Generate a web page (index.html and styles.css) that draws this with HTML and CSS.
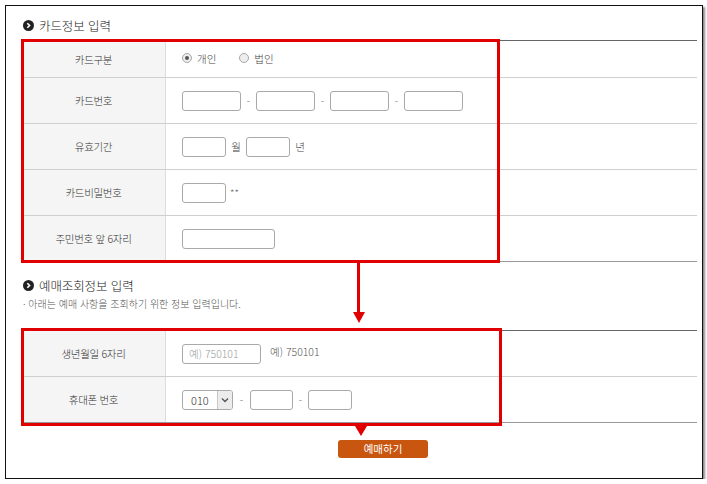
FILE: index.html
```html
<!DOCTYPE html>
<html lang="ko">
<head>
<meta charset="utf-8">
<title>카드정보 입력</title>
<link rel="stylesheet" href="styles.css">
</head>
<body>
<div class="frame">
  <h2 class="sec-title"><svg class="bullet" viewBox="0 0 11 11" width="11" height="11"><circle cx="5.5" cy="5.5" r="5.5" fill="#222"/><path d="M4.3 3.2 L6.6 5.5 L4.3 7.8" fill="none" stroke="#fff" stroke-width="1.6"/></svg>카드정보 입력</h2>
  <div class="table">
    <div class="row first">
      <div class="label">카드구분</div>
      <div class="value">
        <span class="radio checked"></span><span class="rlabel">개인</span>
        <span class="radio"></span><span class="rlabel">법인</span>
      </div>
    </div>
    <div class="row">
      <div class="label">카드번호</div>
      <div class="value">
        <input class="inp w59" type="text"><span class="dash">-</span>
        <input class="inp w59" type="text"><span class="dash">-</span>
        <input class="inp w59" type="text"><span class="dash">-</span>
        <input class="inp w59" type="text">
      </div>
    </div>
    <div class="row">
      <div class="label">유효기간</div>
      <div class="value">
        <input class="inp w44" type="text"><span class="unit">월</span>
        <input class="inp w44" type="text"><span class="unit">년</span>
      </div>
    </div>
    <div class="row">
      <div class="label">카드비밀번호</div>
      <div class="value">
        <input class="inp w44" type="password"><span class="stars">**</span>
      </div>
    </div>
    <div class="row">
      <div class="label">주민번호 앞 6자리</div>
      <div class="value">
        <input class="inp w93" type="text">
      </div>
    </div>
  </div>

  <h2 class="sec-title second"><svg class="bullet" viewBox="0 0 11 11" width="11" height="11"><circle cx="5.5" cy="5.5" r="5.5" fill="#222"/><path d="M4.3 3.2 L6.6 5.5 L4.3 7.8" fill="none" stroke="#fff" stroke-width="1.6"/></svg>예매조회정보 입력</h2>
  <p class="note">· 아래는 예매 사항을 조회하기 위한 정보 입력입니다.</p>
  <div class="table t2">
    <div class="row">
      <div class="label">생년월일 6자리</div>
      <div class="value">
        <input class="inp w79" type="text" placeholder="예) 750101"><span class="example">예) 750101</span>
      </div>
    </div>
    <div class="row">
      <div class="label">휴대폰 번호</div>
      <div class="value">
        <div class="select"><span class="sel-text">010</span><span class="sel-btn"><svg viewBox="0 0 8 6" width="8" height="6"><path d="M1 1.5 L4 4.5 L7 1.5" fill="none" stroke="#555" stroke-width="1.4"/></svg></span></div><span class="dash wide">-</span>
        <input class="inp w43" type="text"><span class="dash">-</span>
        <input class="inp w44" type="text">
      </div>
    </div>
  </div>
  <div class="actions"><button class="btn" type="button">예매하기</button></div>

  <div class="mark box1"></div>
  <div class="mark box2"></div>
  <div class="arrow-line a1"></div>
  <div class="arrow-head h1"></div>
  <div class="arrow-head h2"></div>
</div>
</body>
</html>
```
FILE: styles.css
```css
* { box-sizing: border-box; }
html, body { margin: 0; padding: 0; background: #fff; }
body { font-family: "Noto Sans CJK KR", "Noto Sans", sans-serif; color: #333; }

.frame {
  position: relative;
  margin: 5px 0 0 5px;
  width: 698px;
  height: 474px;
  border: 1px solid #111;
  box-shadow: 2px 2px 2px #8a8a8a;
  padding: 8px 5px 0 16px;
  background: #fff;
}

.sec-title {
  margin: 0 0 4px 0;
  height: 22px;
  display: flex;
  align-items: center;
  font-size: 12.5px;
  font-weight: 300;
  color: #222;
  letter-spacing: -0.1px;
}
.sec-title.second { margin: 12px 0 0 0; }
.bullet { margin: 0 5px 0 1px; flex: none; }

.note {
  margin: 0 0 18px 0;
  height: 16px;
  line-height: 16px;
  font-size: 10px;
  font-weight: 300;
  color: #555;
  letter-spacing: 0;
  padding-left: 1px;
}

.table {
  border-top: 1px solid #666;
  border-bottom: 1px solid #999;
}
.row {
  display: grid;
  grid-template-columns: 144px 1fr;
  height: 46px;
  border-bottom: 1px solid #cfcfcf;
}
.row.first { height: 37px; }
.row:last-child { border-bottom: none; height: 45px; }
.label {
  background: #f5f5f5;
  border-right: 1px solid #dcdcdc;
  display: flex;
  align-items: center;
  justify-content: center;
  font-size: 10.5px;
  font-weight: 300;
  color: #333;
  letter-spacing: -0.3px;
}
.value {
  display: flex;
  align-items: center;
  padding-left: 16px;
  font-size: 10.5px;
  font-weight: 300;
  color: #444;
}

.inp {
  height: 20px;
  border: 1px solid #a9a9a9;
  border-radius: 3px;
  background: #fff;
  padding: 0 6px;
  margin: 0;
  font-family: inherit;
  font-size: 10.5px;
  font-weight: 300;
  outline: none;
}
.inp::placeholder { color: #9a9a9a; }
.w59 { width: 59px; }
.w44 { width: 44px; }
.w43 { width: 43px; }
.w79 { width: 79px; }
.w93 { width: 93px; }

.dash { width: 15px; text-align: center; color: #666; font-size: 10px; }
.dash.wide { width: 17px; }
.unit { width: 20px; text-align: center; color: #444; }
.stars { margin-left: 4px; color: #666; font-size: 10px; }
.example { margin-left: 9px; color: #555; margin-top: -5px; }

.radio {
  width: 10px; height: 10px;
  border: 1px solid #a8a8a8;
  border-radius: 50%;
  background: #eee;
  display: inline-flex;
  align-items: center;
  justify-content: center;
  margin-top: -2px;
}
.radio.checked::after {
  content: "";
  width: 4px; height: 4px;
  border-radius: 50%;
  background: #555;
}
.rlabel { margin: -2px 23px 0 5px; color: #444; }

.select {
  display: flex;
  width: 51px;
  height: 20px;
  border: 1px solid #a9a9a9;
  border-radius: 3px;
  overflow: hidden;
}
.sel-text {
  flex: 1;
  display: flex;
  align-items: center;
  padding-left: 8px;
  font-size: 11px;
  color: #333;
}
.sel-btn {
  width: 15px;
  background: #ececec;
  border-left: 1px solid #c8c8c8;
  display: flex;
  align-items: center;
  justify-content: center;
}

.actions { padding: 11px 0 0 316px; }
.btn {
  width: 90px;
  height: 18px;
  border: none;
  border-radius: 3px;
  background: #c9560f;
  color: #fff;
  font-family: inherit;
  font-size: 10.5px;
  padding: 0;
  line-height: 18px;
}

.mark {
  position: absolute;
  border: 3px solid #e10000;
}
.box1 { left: 15px; top: 33px; width: 479px; height: 224px; }
.box2 { left: 15px; top: 322px; width: 481px; height: 98px; }
.arrow-line {
  position: absolute;
  background: #e10000;
  width: 3px;
}
.a1 { left: 351px; top: 257px; height: 52px; }
.arrow-head {
  position: absolute;
  width: 0; height: 0;
  border-left: 6px solid transparent;
  border-right: 6px solid transparent;
  border-top: 11px solid #e10000;
}
.h1 { left: 346.5px; top: 306px; }
.h2 { left: 349px; top: 420px; border-top-width: 10px; }
```
